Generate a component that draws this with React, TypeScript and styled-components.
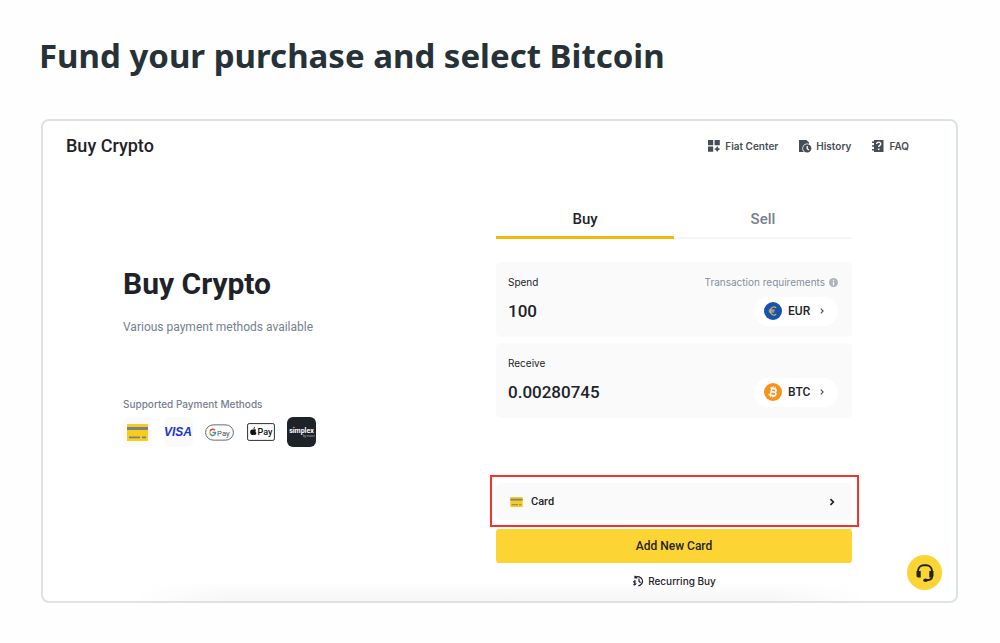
import React from "react";
import styled, { createGlobalStyle } from "styled-components";

const GlobalStyle = createGlobalStyle`
  *, *::before, *::after { box-sizing: border-box; }
  body { margin: 0; background: #fefefe; }
  button, input { font: inherit; color: inherit; }
`;

const ink = "#1e2329";
const muted = "#76808f";
const slate = "#474d57";
const yellow = "#fcd535";
const smallFont = `Inter, "Liberation Sans", sans-serif`;

const Page = styled.main`
  padding: 32px 42px 40px 41px;
  font-family: Roboto, "Liberation Sans", sans-serif;
  color: ${ink};
`;

const PageTitle = styled.h1`
  margin: 0 0 39px -2px;
  font: 700 33px/48px "Noto Sans", "Open Sans", sans-serif;
  color: #263238;
`;

const Panel = styled.section`
  position: relative;
  border: 2px solid #dde2e4;
  border-radius: 8px;
  background:
    linear-gradient(90deg, #fff 10%, transparent 20%, transparent 80%, #fff 90%) bottom / 100% 20px no-repeat,
    linear-gradient(0deg, #f6f6f6, #fff) bottom / 100% 20px no-repeat,
    #fff;
`;

const PanelHeader = styled.header`
  display: flex;
  align-items: center;
  justify-content: space-between;
  height: 50px;
  padding: 0 47px 0 23px;
`;

const PanelTitle = styled.h2`
  margin: 0;
  font-size: 18px;
  line-height: 24px;
  font-weight: 500;
`;

const HeaderNav = styled.nav`
  display: flex;
  gap: 20px;
`;

const NavLink = styled.a`
  display: flex;
  align-items: center;
  gap: 4px;
  font-family: ${smallFont};
  font-size: 10px;
  line-height: 16px;
  font-weight: 600;
  color: ${slate};
  text-decoration: none;
`;

const Content = styled.div`
  display: grid;
  grid-template-columns: minmax(0, 1fr) minmax(0, 1fr);
  gap: 17px;
  padding: 30px 104px 11px 80px;
`;

const Intro = styled.div`
  padding-top: 65px;
`;

const IntroTitle = styled.h3`
  margin: 0 0 17px;
  font-size: 30px;
  line-height: 36px;
  font-weight: 700;
`;

const IntroText = styled.p`
  margin: 0 0 61px;
  font-size: 12px;
  line-height: 16px;
  color: ${muted};
`;

const MethodsTitle = styled.h4`
  margin: 0 0 5px;
  font-family: ${smallFont};
  font-size: 10px;
  line-height: 16px;
  font-weight: 500;
  color: ${muted};
`;

const Methods = styled.ul`
  display: flex;
  gap: 12px;
  margin: 0;
  padding: 0;
  list-style: none;
`;

const Method = styled.li<{ $dark?: boolean; $plain?: boolean }>`
  display: flex;
  align-items: center;
  justify-content: center;
  width: 29px;
  height: 30px;
  border-radius: 6px;
  background: ${(p) => (p.$dark ? "#1e2329" : p.$plain ? "transparent" : "#fafafa")};
`;

const Trade = styled.div`
  display: flex;
  flex-direction: column;
`;

const Tabs = styled.div`
  display: flex;
  margin-bottom: 23px;
`;

const Tab = styled.button<{ $active?: boolean }>`
  flex: 1;
  height: 38px;
  padding: 0 0 3px;
  border: 0;
  background: ${(p) =>
    p.$active
      ? "linear-gradient(#f0b90b, #f0b90b) bottom / 100% 3px no-repeat"
      : "linear-gradient(#f6f6f7, #f6f6f7) bottom / 100% 2px no-repeat"};
  font-size: 15px;
  line-height: 20px;
  font-weight: 500;
  color: ${(p) => (p.$active ? ink : muted)};
`;

const Field = styled.div`
  padding: 12px 14px 11px 12px;
  border-radius: 5px;
  background: #fafafa;

  & + & { margin-top: 6px; }
`;

const FieldRow = styled.div<{ $amount?: boolean }>`
  display: flex;
  align-items: center;
  justify-content: space-between;
  height: ${(p) => (p.$amount ? "30px" : "16px")};
  margin-top: ${(p) => (p.$amount ? "6px" : "0")};
`;

const FieldLabel = styled.label`
  font-family: ${smallFont};
  font-size: 10px;
  line-height: 16px;
`;

const Requirements = styled.a`
  display: flex;
  align-items: center;
  gap: 4px;
  font-family: ${smallFont};
  font-size: 10px;
  line-height: 16px;
  color: #848e9c;
  text-decoration: none;
`;

const Amount = styled.input`
  flex: 1;
  min-width: 0;
  padding: 0;
  border: 0;
  outline: 0;
  background: transparent;
  font-size: 17px;
  line-height: 24px;
  font-weight: 500;
`;

const CurrencyButton = styled.button`
  display: flex;
  align-items: center;
  gap: 6px;
  width: 84px;
  height: 29px;
  padding: 0 12px 0 10px;
  border: 0;
  border-radius: 15px;
  background: #fff;
  font-size: 12px;
  font-weight: 500;

  svg:last-child { margin-left: auto; }
`;

const Highlight = styled.div`
  margin: 57px -7px 2px -6px;
  padding: 6px 5px 5px 4px;
  border: 2px solid #f5322b;
`;

const CardButton = styled.button`
  display: flex;
  align-items: center;
  gap: 8px;
  width: 100%;
  height: 37px;
  padding: 0 16px 0 14px;
  border: 0;
  border-radius: 5px;
  background: #fafafa;
  font-size: 11px;
  font-weight: 500;

  svg:last-child { margin-left: auto; }
`;

const PrimaryButton = styled.button`
  height: 34px;
  border: 0;
  border-radius: 3px;
  background: ${yellow};
  font-size: 12px;
  font-weight: 500;
`;

const RecurringLink = styled.a`
  display: flex;
  align-items: center;
  align-self: center;
  gap: 4px;
  margin-top: 9px;
  font-family: ${smallFont};
  font-size: 10px;
  line-height: 18px;
  font-weight: 500;
  color: ${ink};
  text-decoration: none;
`;

const SupportButton = styled.button`
  position: absolute;
  right: 14px;
  bottom: 11px;
  display: flex;
  align-items: center;
  justify-content: center;
  width: 35px;
  height: 35px;
  padding: 0;
  border: 0;
  border-radius: 50%;
  background: ${yellow};
`;

const GridIcon = () => (
  <svg width="14" height="14" viewBox="0 0 14 14" fill={slate} aria-hidden="true">
    <path d="M1 1h5.2v5.2H1zM7.6 1h5.2v5.2H7.6zM1 7.6h5.2v5.2H1zM10.2 7.1l1.1 1.9 1.9 1.1-1.9 1.1-1.1 1.9-1.1-1.9-1.9-1.1 1.9-1.1z" />
  </svg>
);

const HistoryIcon = () => (
  <svg width="14" height="14" viewBox="0 0 14 14" fill={slate} aria-hidden="true">
    <path d="M1 1h7.400L11 3.600V13H1z" />
    <circle cx="9.200" cy="9.400" r="4.900" fill="#fff" />
    <circle cx="9.200" cy="9.400" r="4.200" />
    <path d="M9.200 7v2.700l1.700 1.300" fill="none" stroke="#fff" strokeWidth="1.300" />
  </svg>
);

const FaqIcon = () => (
  <svg width="14" height="14" viewBox="0 0 14 14" aria-hidden="true">
    <path fill={slate} d="M3 1h9.500v12H3v-1.500H1V10h2V7.800H1V6.300h2V4H1V2.500h2z" />
    <path d="M5.700 5.100c0-1.300.8-2 2-2s2 .7 2 1.800c0 1.500-2 1.500-2 3.200" fill="none" stroke="#fff" strokeWidth="1.400" />
    <path fill="#fff" d="M6.900 9.500h1.600v1.600H6.900z" />
  </svg>
);

const InfoIcon = () => (
  <svg width="9" height="9" viewBox="0 0 10 10" aria-hidden="true">
    <circle cx="5" cy="5" r="5" fill="#aeb4bc" />
    <path d="M4.300 2h1.400v1.400H4.300zM4.300 4.200h1.400V8H4.300z" fill="#fff" />
  </svg>
);

const Chevron = ({ bold }: { bold?: boolean }) => (
  <svg width="8" height="8" viewBox="0 0 8 8" fill="none" stroke={bold ? ink : slate} strokeWidth={bold ? 1.7 : 1.1} aria-hidden="true">
    <path d={bold ? "M2.500 1.200L5.300 4 2.500 6.800" : "M2.800 1.700L5.100 4 2.800 6.300"} />
  </svg>
);

const EuroIcon = () => (
  <svg width="18" height="18" viewBox="0 0 18 18" aria-hidden="true">
    <circle cx="9" cy="9" r="9" fill="#1652b1" />
    <path d="M12.200 5.700A3.900 3.900 0 1 0 12.200 12.300M4.800 8.200h5.900M4.800 9.900h5.400" fill="none" stroke="#d5b34d" strokeWidth="1.200" />
  </svg>
);

const BitcoinIcon = () => (
  <svg width="18" height="18" viewBox="0 0 32 32" aria-hidden="true">
    <circle cx="16" cy="16" r="16" fill="#f7931a" />
    <g transform="rotate(14 16 16)" fill="none" stroke="#fff">
      <path strokeWidth="2.800" d="M9.500 9.800h8.200a3 3 0 0 1 0 6h-5M12.700 9.800v12.600M9.500 22.400h9a3.300 3.300 0 0 0 0-6.600h-1" />
      <path strokeWidth="2" d="M14 6v4M18 6v4M14 22v4M18 22v4" />
    </g>
  </svg>
);

const CreditCardIcon = ({ width, height }: { width: number; height: number }) => (
  <svg width={width} height={height} viewBox="0 0 21 17" aria-hidden="true">
    <path fill="#f8cc1b" d="M0 0h21v17H0z" />
    <path fill="#76808f" d="M0 3h21v3H0zM2 12.500h11v1.700H2zM15 12.500h4v1.700h-4z" />
  </svg>
);

const VisaLogo = () => (
  <svg width="29" height="18" viewBox="0 0 29 18" role="img" aria-label="Visa">
    <text x="14" y="13" textAnchor="middle" fontFamily="Liberation Sans, sans-serif" fontSize="12" fontWeight="700" fontStyle="italic" fill="#1a35c8">VISA</text>
  </svg>
);

const GooglePayLogo = () => (
  <svg width="30" height="17" viewBox="0 0 30 17" role="img" aria-label="Google Pay">
    <rect x=".600" y=".600" width="28.800" height="15.800" rx="7.900" fill="#fff" stroke="#5f6368" />
    <g fill="none" strokeWidth="1.600">
      <path stroke="#ea4335" d="M10.200 6.300A2.800 2.800 0 0 0 5.300 7.200" />
      <path stroke="#fbbc04" d="M5.300 7.200a3 3 0 0 0 0 2.600" />
      <path stroke="#34a853" d="M5.300 9.800a2.800 2.800 0 0 0 4.500 1" />
      <path stroke="#4285f4" d="M9.800 10.800a2.800 2.800 0 0 0 1-2.300H7.800" />
    </g>
    <text x="12.500" y="12" fontFamily="Roboto, sans-serif" fontSize="8" fill="#4b5056">Pay</text>
  </svg>
);

const ApplePayLogo = () => (
  <svg width="28" height="18" viewBox="0 0 28 18" role="img" aria-label="Apple Pay">
    <rect x=".600" y=".600" width="26.800" height="16.800" rx="1.500" fill="#fff" stroke="#2b2f36" />
    <path d="M6.700 6.600c.8-.4 1.900-.3 2.500.5-1 .7-.9 2.300.3 2.800-.5 1.300-1.200 2.100-1.800 2.100-.6 0-.8-.3-1.300-.3s-.8.3-1.300.3C4 12 3.100 10.200 3.100 8.900c0-2 1.400-3 3.600-2.300zM6.400 6.100c0-1 .7-1.900 1.600-2 .1 1.100-.6 2-1.600 2z" fill="#111" />
    <text x="10.500" y="12" fontFamily="Roboto, sans-serif" fontSize="9" fontWeight="500" fill="#111">Pay</text>
  </svg>
);

const SimplexLogo = () => (
  <svg width="29" height="30" viewBox="0 0 29 30" role="img" aria-label="Simplex by Nuvei">
    <text x="14.500" y="16" textAnchor="middle" fontFamily="Roboto, sans-serif" fontSize="7" fontWeight="700" fill="#fff">simplex</text>
    <text x="16" y="20" fontFamily="Open Sans, sans-serif" fontSize="3" fill="#c5c9ce">by nuvei</text>
    <circle cx="6.700" cy="10.500" r=".700" fill="#f7931a" />
  </svg>
);

const RecurringIcon = () => (
  <svg width="12" height="12" viewBox="0 0 12 12" fill="none" stroke={ink} strokeWidth="1.200" aria-hidden="true">
    <path d="M3.200 2.500A4.600 4.600 0 1 1 6.300 10.800M3 .700v2.200h2.300M7 3.400v2.900l1.600 1.500" />
    <path strokeWidth="1" d="M4 6.300c-.5-.5-2.600-.6-2.600.6 0 1.300 2.700.6 2.700 1.900 0 1.200-2.300 1.100-3 .4M2.700 5.300v5.200" />
  </svg>
);

const HeadsetIcon = () => (
  <svg width="20" height="20" viewBox="0 0 20 20" aria-hidden="true">
    <path d="M3 9V8A6 6 0 0 1 8.800 2.200h2.400A6 6 0 0 1 17 8v5.500q0 2.500-2.500 3.200l-3 .600" fill="none" stroke={ink} strokeWidth="2" />
    <path fill={ink} d="M1.500 8H5.700v6.500H3.200A1.700 1.700 0 0 1 1.500 12.800zM14.300 8h4.200v4.800a1.700 1.700 0 0 1-1.700 1.700h-2.500z" />
    <ellipse cx="10.500" cy="17.300" rx="2.200" ry="1.700" fill={ink} />
  </svg>
);

export default function App() {
  return (
    <>
      <GlobalStyle />
      <Page>
        <PageTitle>Fund your purchase and select Bitcoin</PageTitle>
        <Panel>
          <PanelHeader>
            <PanelTitle>Buy Crypto</PanelTitle>
            <HeaderNav>
              <NavLink href="#fiat"><GridIcon />Fiat Center</NavLink>
              <NavLink href="#history"><HistoryIcon />History</NavLink>
              <NavLink href="#faq"><FaqIcon />FAQ</NavLink>
            </HeaderNav>
          </PanelHeader>
          <Content>
            <Intro>
              <IntroTitle>Buy Crypto</IntroTitle>
              <IntroText>Various payment methods available</IntroText>
              <MethodsTitle>Supported Payment Methods</MethodsTitle>
              <Methods>
                <Method><CreditCardIcon width={21} height={17} /></Method>
                <Method><VisaLogo /></Method>
                <Method $plain><GooglePayLogo /></Method>
                <Method $plain><ApplePayLogo /></Method>
                <Method $dark><SimplexLogo /></Method>
              </Methods>
            </Intro>
            <Trade>
              <Tabs role="tablist">
                <Tab role="tab" aria-selected="true" $active>Buy</Tab>
                <Tab role="tab" aria-selected="false">Sell</Tab>
              </Tabs>
              <Field>
                <FieldRow>
                  <FieldLabel htmlFor="spend">Spend</FieldLabel>
                  <Requirements href="#requirements">Transaction requirements<InfoIcon /></Requirements>
                </FieldRow>
                <FieldRow $amount>
                  <Amount id="spend" defaultValue="100" />
                  <CurrencyButton><EuroIcon />EUR<Chevron /></CurrencyButton>
                </FieldRow>
              </Field>
              <Field>
                <FieldRow>
                  <FieldLabel htmlFor="receive">Receive</FieldLabel>
                </FieldRow>
                <FieldRow $amount>
                  <Amount id="receive" defaultValue="0.00280745" />
                  <CurrencyButton><BitcoinIcon />BTC<Chevron /></CurrencyButton>
                </FieldRow>
              </Field>
              <Highlight>
                <CardButton><CreditCardIcon width={13} height={10} />Card<Chevron bold /></CardButton>
              </Highlight>
              <PrimaryButton>Add New Card</PrimaryButton>
              <RecurringLink href="#recurring"><RecurringIcon />Recurring Buy</RecurringLink>
            </Trade>
          </Content>
          <SupportButton aria-label="Customer support"><HeadsetIcon /></SupportButton>
        </Panel>
      </Page>
    </>
  );
}
